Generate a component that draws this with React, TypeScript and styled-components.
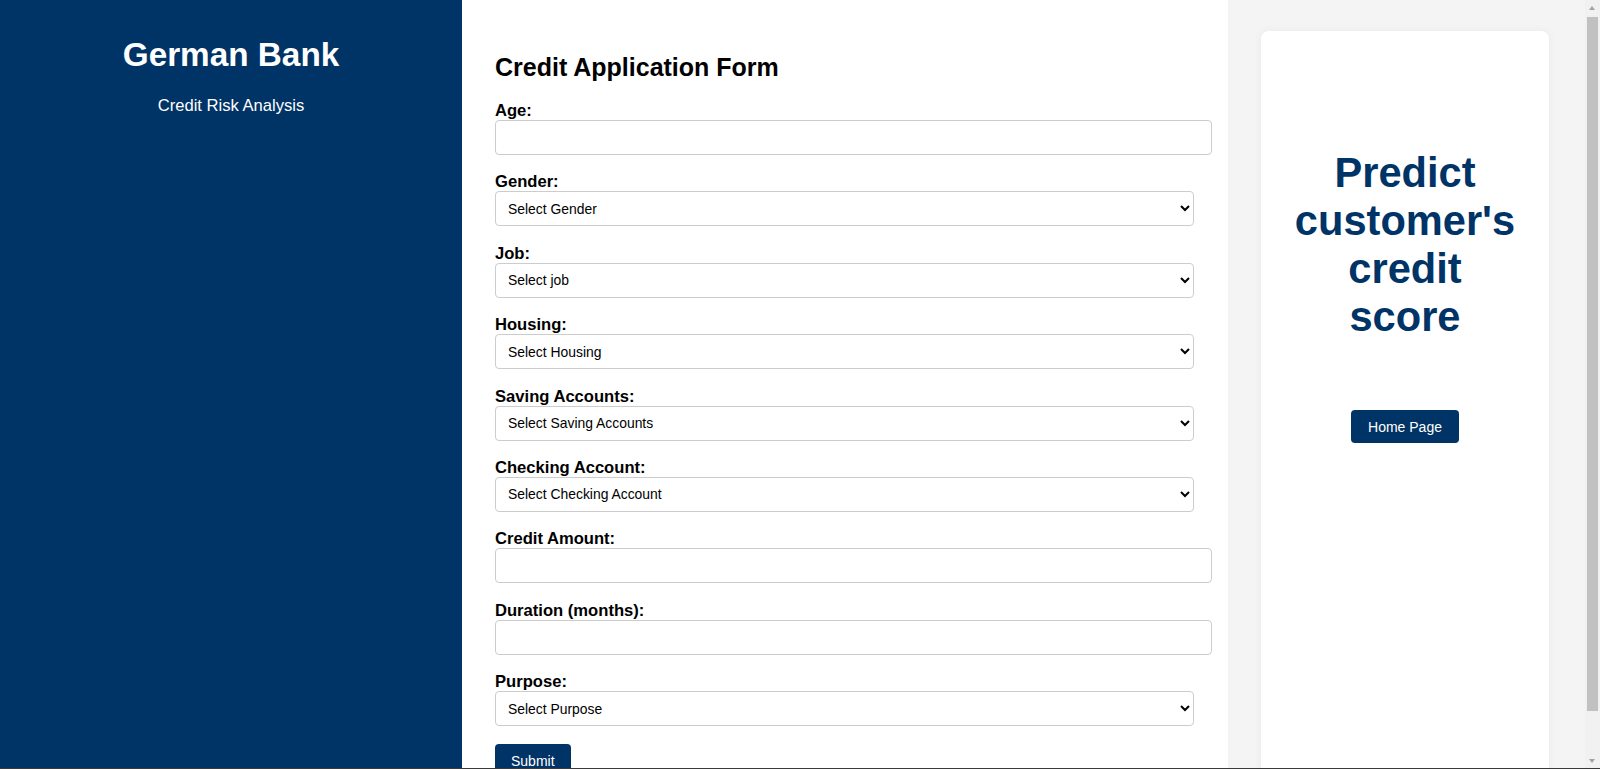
import React from "react";
import styled, { createGlobalStyle } from "styled-components";

const GlobalStyle = createGlobalStyle`
  html, body {
    margin: 0;
    padding: 0;
    font-family: "Liberation Sans", Arial, sans-serif;
    color: #000;
    background: #fff;
  }
`;

const Page = styled.div`
  display: flex;
  min-height: 100vh;
  align-items: stretch;
`;

const Sidebar = styled.aside`
  flex: 0 0 462px;
  background: #003366;
  color: #fff;
  text-align: center;
  padding: 16px 20px;
  box-sizing: border-box;
`;

const Brand = styled.h1`
  font-size: 33.3px;
  font-weight: bold;
  margin: 20px 0 22px;
`;

const Tagline = styled.p`
  font-size: 16.6px;
  margin: 0;
`;

const Main = styled.main`
  flex: 0 0 766px;
  box-sizing: border-box;
  padding: 32px 34px 34px 33px;
  background: #fff;
`;

const FormTitle = styled.h2`
  font-size: 25px;
  font-weight: bold;
  margin: 21px 0 20px;
  line-height: 28px;
`;

const Form = styled.form`
  display: flex;
  flex-direction: column;
`;

const Group = styled.div`
  margin-bottom: 17.4px;
`;

const Label = styled.label`
  display: block;
  font-size: 16.6px;
  line-height: 19px;
  font-weight: bold;
  margin-bottom: 0;
`;

const TextInput = styled.input`
  display: block;
  width: 100%;
  box-sizing: content-box;
  height: 17px;
  padding: 8px;
  border: 1px solid #ccc;
  border-radius: 4px;
  font-family: "Liberation Sans", Arial, sans-serif;
  font-size: 13.9px;
  background: #fff;
`;

const Select = styled.select`
  display: block;
  width: 100%;
  box-sizing: border-box;
  height: 35px;
  padding: 0 8px;
  border: 1px solid #ccc;
  border-radius: 4px;
  font-family: "Liberation Sans", Arial, sans-serif;
  font-size: 13.9px;
  color: #000;
  background: #fff;
`;

const Button = styled.button`
  align-self: flex-start;
  background: #003366;
  color: #fff;
  border: none;
  border-radius: 4px;
  font-family: "Liberation Sans", Arial, sans-serif;
  font-size: 14px;
  padding: 9px 16px;
  cursor: pointer;
`;

const Aside = styled.section`
  flex: 1;
  background: #f4f4f4;
  padding: 31px 51px 32px 33px;
  box-sizing: border-box;
  display: flex;
`;

const Card = styled.div`
  flex: 1;
  background: #fff;
  border-radius: 8px;
  box-shadow: 0 0 8px rgba(0, 0, 0, 0.05);
  display: flex;
  flex-direction: column;
  align-items: center;
  padding: 118px 20px 20px;
`;

const Headline = styled.h1`
  color: #003366;
  font-size: 41.6px;
  font-weight: bold;
  text-align: center;
  margin: 0 0 69px;
  line-height: 48px;
`;

const HomeButton = styled.button`
  background: #003366;
  color: #fff;
  border: none;
  border-radius: 4px;
  font-family: "Liberation Sans", Arial, sans-serif;
  font-size: 14px;
  padding: 8px 17px;
  height: 33px;
  cursor: pointer;
`;

const ScrollTrack = styled.div`
  position: fixed;
  top: 0;
  right: 0;
  width: 15px;
  height: 100vh;
  background: #f1f1f1;
`;

const ScrollThumb = styled.div`
  position: absolute;
  top: 17px;
  bottom: 58px;
  left: 2px;
  right: 2px;
  background: #c1c1c1;
`;

const ScrollArrow = styled.div<{ $down?: boolean }>`
  position: absolute;
  left: 4px;
  ${(p) => (p.$down ? "bottom: 6px;" : "top: 6px;")}
  width: 0;
  height: 0;
  border-left: 3.5px solid transparent;
  border-right: 3.5px solid transparent;
  ${(p) =>
    p.$down ? "border-top: 4px solid #a3a3a3;" : "border-bottom: 4px solid #a3a3a3;"}
`;

const BottomEdge = styled.div`
  position: fixed;
  left: 0;
  right: 0;
  bottom: 0;
  height: 1px;
  background: #3a3a3a;
`;

type Field =
  | { kind: "input"; label: string; id: string }
  | { kind: "select"; label: string; id: string; placeholder: string; options: string[] };

const fields: Field[] = [
  { kind: "input", label: "Age:", id: "age" },
  { kind: "select", label: "Gender:", id: "gender", placeholder: "Select Gender", options: ["male", "female"] },
  { kind: "select", label: "Job:", id: "job", placeholder: "Select job", options: ["0", "1", "2", "3"] },
  { kind: "select", label: "Housing:", id: "housing", placeholder: "Select Housing", options: ["own", "rent", "free"] },
  { kind: "select", label: "Saving Accounts:", id: "saving", placeholder: "Select Saving Accounts", options: ["little", "moderate", "quite rich", "rich"] },
  { kind: "select", label: "Checking Account:", id: "checking", placeholder: "Select Checking Account", options: ["little", "moderate", "rich"] },
  { kind: "input", label: "Credit Amount:", id: "credit" },
  { kind: "input", label: "Duration (months):", id: "duration" },
  { kind: "select", label: "Purpose:", id: "purpose", placeholder: "Select Purpose", options: ["car", "furniture/equipment", "radio/TV", "education", "business"] },
];

export default function App() {
  return (
    <>
      <GlobalStyle />
      <Page>
        <Sidebar>
          <Brand>German Bank</Brand>
          <Tagline>Credit Risk Analysis</Tagline>
        </Sidebar>
        <Main>
          <FormTitle>Credit Application Form</FormTitle>
          <Form onSubmit={(e) => e.preventDefault()}>
            {fields.map((f) => (
              <Group key={f.id}>
                <Label htmlFor={f.id}>{f.label}</Label>
                {f.kind === "input" ? (
                  <TextInput id={f.id} type="text" />
                ) : (
                  <Select id={f.id} defaultValue="">
                    <option value="">{f.placeholder}</option>
                    {f.options.map((o) => (
                      <option key={o} value={o}>
                        {o}
                      </option>
                    ))}
                  </Select>
                )}
              </Group>
            ))}
            <Button type="submit">Submit</Button>
          </Form>
        </Main>
        <Aside>
          <Card>
            <Headline>
              Predict
              <br />
              customer's
              <br />
              credit
              <br />
              score
            </Headline>
            <HomeButton type="button">Home Page</HomeButton>
          </Card>
        </Aside>
      </Page>
      <ScrollTrack>
        <ScrollArrow />
        <ScrollThumb />
        <ScrollArrow $down />
      </ScrollTrack>
      <BottomEdge />
    </>
  );
}
